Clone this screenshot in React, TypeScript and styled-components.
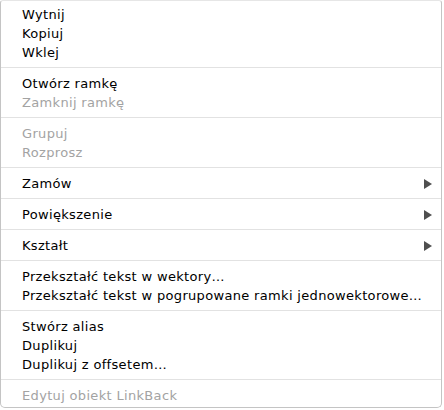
import React from "react";
import styled, { createGlobalStyle } from "styled-components";

const Global = createGlobalStyle`
  html, body { margin: 0; padding: 0; background: #ffffff; }
  body { font-family: "DejaVu Sans", "Liberation Sans", sans-serif; }
`;

const Menu = styled.div`
  box-sizing: border-box;
  width: 442px;
  height: 408px;
  background: #ffffff;
  border: 1px solid #c4c4c4;
  border-top-color: #e6e6e6;
  border-radius: 3px 3px 5px 5px;
  padding: 4px 0 2px;
  display: flex;
  flex-direction: column;
`;

const Item = styled.div<{ $disabled?: boolean }>`
  display: flex;
  align-items: center;
  justify-content: space-between;
  height: 19px;
  line-height: 19px;
  padding: 0 9px 0 21px;
  font-size: 13px;
  letter-spacing: 0.33px;
  color: ${(p) => (p.$disabled ? "#a3a3a3" : "#000000")};
  white-space: nowrap;
`;

const Separator = styled.div`
  height: 1px;
  margin: 5px 0 6px;
  background: #e2e2e2;
`;

const Arrow = () => (
  <svg width="8" height="10" viewBox="0 0 8 10">
    <polygon points="0,0 8,5 0,10" fill="#4f4f4f" />
  </svg>
);

type Entry = { label: string; disabled?: boolean; sub?: boolean } | "sep";

const entries: Entry[] = [
  { label: "Wytnij" },
  { label: "Kopiuj" },
  { label: "Wklej" },
  "sep",
  { label: "Otwórz ramkę" },
  { label: "Zamknij ramkę", disabled: true },
  "sep",
  { label: "Grupuj", disabled: true },
  { label: "Rozprosz", disabled: true },
  "sep",
  { label: "Zamów", sub: true },
  "sep",
  { label: "Powiększenie", sub: true },
  "sep",
  { label: "Kształt", sub: true },
  "sep",
  { label: "Przekształć tekst w wektory…" },
  { label: "Przekształć tekst w pogrupowane ramki jednowektorowe…" },
  "sep",
  { label: "Stwórz alias" },
  { label: "Duplikuj" },
  { label: "Duplikuj z offsetem…" },
  "sep",
  { label: "Edytuj obiekt LinkBack", disabled: true },
];

export default function App() {
  return (
    <>
      <Global />
      <Menu>
        {entries.map((e, i) =>
          e === "sep" ? (
            <Separator key={i} />
          ) : (
            <Item key={i} $disabled={e.disabled}>
              <span>{e.label}</span>
              {e.sub && <Arrow />}
            </Item>
          )
        )}
      </Menu>
    </>
  );
}
